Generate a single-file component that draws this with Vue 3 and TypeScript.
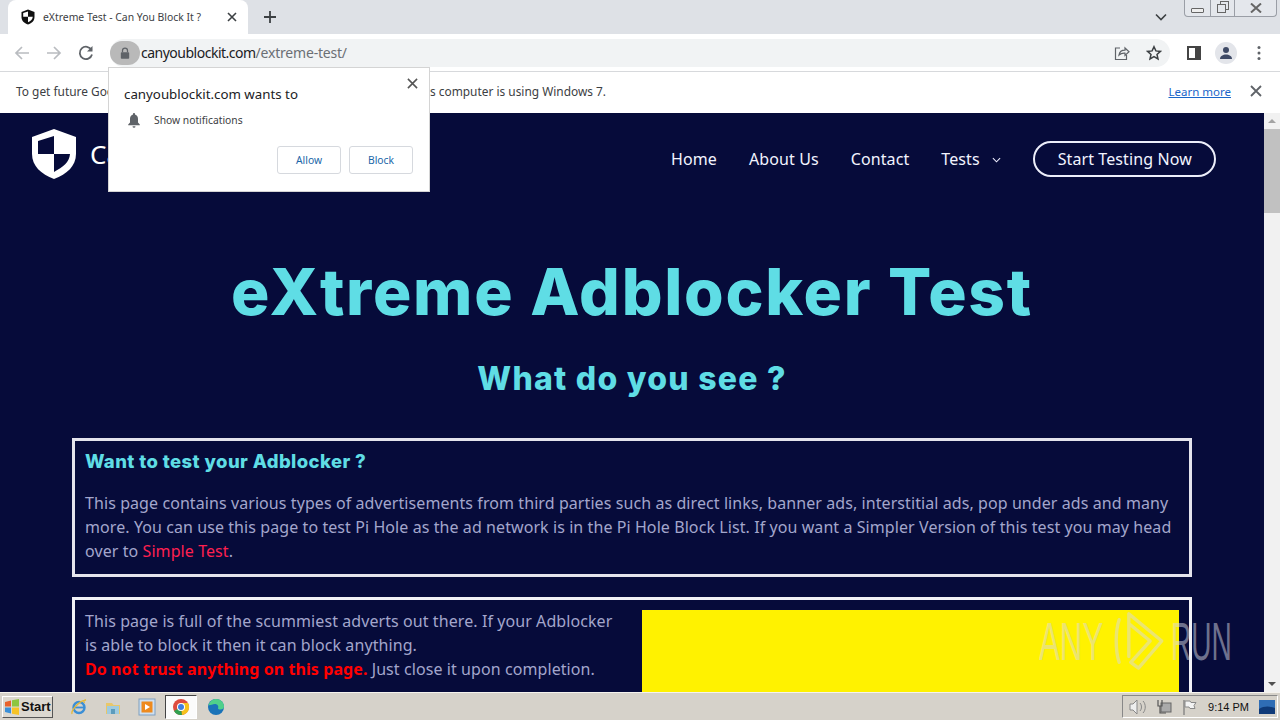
<template>
  <div class="screen">
    <div class="tabstrip">
      <div class="tab">
        <svg class="favicon" viewBox="0 0 16 16" width="16" height="16">
          <path d="M8 .5 14.500 3v5c0 3.600-2.600 6.300-6.500 7.500C4.100 14.300 1.500 11.600 1.500 8V3z" fill="#111" />
          <path d="M8 2.500v5.300H3.200V4zM8 7.800h4.800c-.2 2.600-2 4.400-4.800 5.500z" fill="#fff" />
        </svg>
        <span class="tab-title">eXtreme Test - Can You Block It ?</span>
        <svg class="tab-x" viewBox="0 0 10 10" width="10" height="10">
          <path d="M1 1l8 8M9 1l-8 8" stroke="#3c4043" stroke-width="1.600" />
        </svg>
      </div>
      <svg class="newtab" viewBox="0 0 14 14" width="14" height="14">
        <path d="M7 1v12M1 7h12" stroke="#3c4043" stroke-width="1.800" />
      </svg>
      <svg class="tabs-menu" viewBox="0 0 12 8" width="12" height="8">
        <path d="M1 1.500l5 5 5-5" fill="none" stroke="#3c4043" stroke-width="1.600" />
      </svg>
      <div class="winbtns">
        <span class="winbtn min"><i></i></span>
        <span class="winbtn max"><i></i><b></b></span>
        <span class="winbtn close">
          <svg viewBox="0 0 12 10" width="12" height="10">
            <path d="M1 .5l10 9M11 .5l-10 9" stroke="#666" stroke-width="2" />
          </svg>
        </span>
      </div>
    </div>

    <div class="toolbar">
      <svg class="nav-ic first" viewBox="0 0 16 16" width="16" height="16">
        <path d="M15 8H2M8 2 2 8l6 6" fill="none" stroke="#b9bcc0" stroke-width="1.700" />
      </svg>
      <svg class="nav-ic" viewBox="0 0 16 16" width="16" height="16">
        <path d="M1 8h13M8 2l6 6-6 6" fill="none" stroke="#b9bcc0" stroke-width="1.700" />
      </svg>
      <svg class="nav-ic" viewBox="0 0 16 16" width="16" height="16">
        <path d="M13.500 5A6.200 6.200 0 1 0 14 9.500" fill="none" stroke="#5f6368" stroke-width="1.800" />
        <path d="M14.500 1v5.500H9z" fill="#5f6368" />
      </svg>
      <div class="omnibox">
        <span class="lock-chip">
          <svg viewBox="0 0 12 14" width="10" height="12">
            <path d="M3 6V4a3 3 0 0 1 6 0v2" fill="none" stroke="#5f6368" stroke-width="1.500" />
            <rect x="1" y="6" width="10" height="8" rx="1" fill="#5f6368" />
          </svg>
        </span>
        <span class="url"><span class="host">canyoublockit.com</span>/extreme-test/</span>
        <svg class="share" viewBox="0 0 16 16" width="16" height="16">
          <path d="M6 3H1.500v11.500h11V10" fill="none" stroke="#5f6368" stroke-width="1.200" />
          <path d="M5 10c.5-3 3-4.800 6-4.800V3l4 3.800-4 3.700V8.200C8.500 8 6.500 8.600 5 10z" fill="none" stroke="#5f6368" stroke-width="1.200" />
        </svg>
        <svg class="star" viewBox="0 0 16 16" width="16" height="16">
          <path d="M8 1.700l1.900 4.200 4.500.5-3.400 3 1 4.500L8 11.600l-4 2.300 1-4.500-3.400-3 4.500-.5z" fill="none" stroke="#3c4043" stroke-width="1.500" />
        </svg>
      </div>
      <svg class="panel" viewBox="0 0 14 14" width="14" height="14">
        <rect x="1" y="1" width="12" height="12" fill="#fff" stroke="#444" stroke-width="2" />
        <rect x="8" y="1" width="5" height="12" fill="#444" />
      </svg>
      <span class="avatar">
        <svg viewBox="0 0 16 16" width="16" height="16">
          <circle cx="8" cy="5" r="3" fill="#3f4a66" />
          <path d="M2 14c0-3 3-4.500 6-4.500s6 1.500 6 4.500z" fill="#3f4a66" />
        </svg>
      </span>
      <svg class="kebab" viewBox="0 0 4 16" width="4" height="16">
        <circle cx="2" cy="2.500" r="1.500" fill="#5f6368" />
        <circle cx="2" cy="8" r="1.500" fill="#5f6368" />
        <circle cx="2" cy="13.500" r="1.500" fill="#5f6368" />
      </svg>
    </div>

    <div class="infobar">
      <span class="info-text">To get future Google Chrome updates, you'll need Windows 10 or later. This computer is using Windows 7.</span>
      <a class="learn">Learn more</a>
      <svg class="info-x" viewBox="0 0 12 12" width="12" height="12">
        <path d="M1 1l10 10M11 1 1 11" stroke="#5f6368" stroke-width="1.800" />
      </svg>
    </div>

    <div class="viewport">
      <main class="page">
        <header class="site-head">
          <div class="brand">
            <svg viewBox="0 0 44 50" width="44" height="50">
              <path d="M22 0 44 8v17c0 12-9 20-22 25C9 45 0 37 0 25V8z" fill="#fff" />
              <path d="M22 7v18H6V12zM22 25h16c-.5 8-7 13-16 18z" fill="#060b3a" />
            </svg>
            <span class="brand-name">Can You Block It</span>
          </div>
          <nav class="nav">
            <a v-for="link in links" :key="link">{{ link }}</a>
            <a class="tests">Tests
              <svg viewBox="0 0 10 6" width="9" height="6">
                <path d="M1 1l4 4 4-4" fill="none" stroke="#eef" stroke-width="1.200" />
              </svg>
            </a>
            <a class="cta">Start Testing Now</a>
          </nav>
        </header>

        <h1>eXtreme Adblocker Test</h1>
        <h2>What do you see ?</h2>

        <section class="box intro">
          <h3>Want to test your Adblocker ?</h3>
          <p>This page contains various types of advertisements from third parties such as direct links, banner ads, interstitial ads, pop under ads and many more. You can use this page to test Pi Hole as the ad network is in the Pi Hole Block List. If you want a Simpler Version of this test you may head over to <a class="simple">Simple Test</a>.</p>
        </section>

        <section class="box split">
          <p class="warn-copy">This page is full of the scummiest adverts out there. If your Adblocker is able to block it then it can block anything.<br /><strong>Do not trust anything on this page.</strong> Just close it upon completion.</p>
          <div class="ad"></div>
        </section>
      </main>
      <div class="scrollbar">
        <span class="arrow up"></span>
        <span class="thumb"></span>
        <span class="track"></span>
        <span class="arrow down"></span>
      </div>

      <div class="watermark">
        <span class="wm-any">ANY</span>
        <svg viewBox="0 0 56 64" width="55" height="62">
          <path d="M8 10C4 22 4 42 8 54M18 4l34 28-24 28-8-6 20-22-22-18M18 4v44" fill="none" stroke="currentColor" stroke-width="3.500" stroke-linejoin="round" stroke-linecap="round" />
        </svg>
        <span class="wm-run">RUN</span>
      </div>
    </div>

    <div class="prompt">
      <svg class="prompt-x" viewBox="0 0 12 12" width="11" height="11">
        <path d="M1 1l10 10M11 1 1 11" stroke="#555" stroke-width="1.700" />
      </svg>
      <div class="prompt-title">canyoublockit.com wants to</div>
      <div class="prompt-row">
        <svg viewBox="0 0 14 16" width="14" height="16">
          <path d="M7 1c-.7 0-1 .5-1 1v.6C3.800 3.200 3 5 3 7v3.500L1.200 12.500v.8h11.600v-.8L11 10.500V7c0-2-.8-3.800-3-4.400V2c0-.5-.3-1-1-1z" fill="#5f6368" />
          <path d="M5.500 14.200a1.500 1.500 0 0 0 3 0z" fill="#5f6368" />
        </svg>
        <span>Show notifications</span>
      </div>
      <div class="prompt-actions">
        <button>Allow</button>
        <button>Block</button>
      </div>
    </div>

    <footer class="taskbar">
      <div class="start">
        <svg viewBox="0 0 16 16" width="16" height="16">
          <path d="M1 3l6-1.500v6H1z" fill="#e8622c" />
          <path d="M8 1.300 15 0v7.500H8z" fill="#8dc63f" />
          <path d="M1 8.500h6v6L1 13z" fill="#3a8fd8" />
          <path d="M8 8.500h7V16l-7-1.300z" fill="#f7c325" />
        </svg>
        <span>Start</span>
      </div>
      <span class="task ie">
        <svg viewBox="0 0 18 18" width="18" height="18">
          <circle cx="9" cy="9.500" r="5.500" fill="none" stroke="#3b8fd6" stroke-width="2.400" />
          <path d="M4 9.500h10" stroke="#3b8fd6" stroke-width="1.800" />
          <path d="M2 16C1 13 8 3 16 2c-2 0-2.500 1-1.500 3" fill="none" stroke="#e5b93a" stroke-width="1.300" />
        </svg>
      </span>
      <span class="task">
        <svg viewBox="0 0 18 18" width="18" height="18">
          <path d="M2 5h6l1.500 2H16v9H2z" fill="#e8c76a" />
          <rect x="3" y="8" width="12" height="8" fill="#9fcbe0" />
          <rect x="7" y="11" width="4" height="5" fill="#5d9cbc" />
        </svg>
      </span>
      <span class="task">
        <svg viewBox="0 0 18 18" width="18" height="18">
          <rect x="1" y="1" width="16" height="16" fill="#cfe0f0" stroke="#7f9fc0" />
          <rect x="3.500" y="3.500" width="11" height="11" fill="#ee8a1d" />
          <path d="M7 6l5 3-5 3z" fill="#fff" />
        </svg>
      </span>
      <span class="task active">
        <svg viewBox="0 0 18 18" width="18" height="18">
          <circle cx="9" cy="9" r="8" fill="#dd4b3e" />
          <path d="M9 9 2 13a8 8 0 0 0 8 4z" fill="#2fa04f" />
          <path d="M9 5h7a8 8 0 0 1-6 12z" fill="#f6c21c" />
          <circle cx="9" cy="9" r="4" fill="#fff" />
          <circle cx="9" cy="9" r="3" fill="#3f7fe0" />
        </svg>
      </span>
      <span class="task edge">
        <svg viewBox="0 0 18 18" width="18" height="18">
          <circle cx="9" cy="9" r="8" fill="#1a73b8" />
          <path d="M1.500 7C3 2.500 7 1 9 1c4.500 0 8 3.500 8 7.500 0 2-1.500 3-3.500 3-1.500 0-2.500-.5-2.500-1.500 1-1.500-.5-4-3-4-3 0-5.500 2-6.500 1z" fill="#4fd08a" />
        </svg>
      </span>
      <div class="tray">
        <svg viewBox="0 0 18 16" width="18" height="16">
          <path d="M1 5h3l4-4v14l-4-4H1z" fill="#eee" stroke="#888" />
          <path d="M11 4c2 2 2 6 0 8M14 2c3 3 3 9 0 12" fill="none" stroke="#888" />
        </svg>
        <svg viewBox="0 0 16 16" width="16" height="16">
          <rect x="5" y="4" width="10" height="9" fill="#aaa" stroke="#666" />
          <path d="M2 1v6h4V1M4 7v7h6" fill="none" stroke="#555" stroke-width="1.200" />
        </svg>
        <svg viewBox="0 0 16 16" width="16" height="16">
          <path d="M3 1v15" stroke="#777" stroke-width="1.200" />
          <path d="M4 2h5l1 1.500h5l-2 3 1 3H9L8 8H4z" fill="#f3f3f3" stroke="#888" />
        </svg>
        <span class="clock">9:14 PM</span>
        <svg viewBox="0 0 16 14" width="16" height="14">
          <rect width="16" height="14" fill="#2f6db5" />
          <path d="M0 9c5-3 10-3 16-1v6H0z" fill="#0f3a78" />
        </svg>
      </div>
    </footer>
  </div>
</template>

<script setup lang="ts">
  const links: string[] = ["Home", "About Us", "Contact"];
</script>

<style>
  html,
  body {
    margin: 0;
    overflow: hidden;
  }
</style>

<style scoped>
  .screen {
    position: relative;
    width: 1280px;
    height: 720px;
    display: flex;
    flex-direction: column;
    overflow: hidden;
    font-family: "Open Sans", "Noto Sans", sans-serif;
    background: #fff;
  }

  /* browser chrome */
  .tabstrip {
    height: 34px;
    flex: none;
    display: flex;
    align-items: flex-end;
    background: #dee1e6;
    padding-left: 8px;
    box-sizing: border-box;
  }

  .tab {
    width: 240px;
    height: 34px;
    background: #fff;
    border-radius: 8px 8px 0 0;
    display: flex;
    align-items: center;
    box-sizing: border-box;
    padding: 0 8px 0 12px;
  }

  .favicon {
    flex: none;
    margin-right: 7px;
  }

  .tab-title {
    flex: 1;
    font-size: 10.400px;
    color: #3c4043;
    white-space: nowrap;
    font-family: "Noto Sans", sans-serif;
  }

  .tab-x {
    margin-right: 3px;
  }

  .newtab {
    margin: 0 0 10px 15px;
  }

  .tabs-menu {
    margin: 0 0 13px auto;
  }

  .winbtns {
    display: flex;
    align-self: flex-start;
    margin: 0 3px 0 17px;
    height: 16px;
    border: 1px solid #9a9ea6;
    border-top: none;
    border-radius: 0 0 4px 4px;
    background: #e4e7ec;
  }

  .winbtn {
    width: 24px;
    display: flex;
    align-items: center;
    justify-content: center;
    position: relative;
    border-left: 1px solid #9a9ea6;
    box-sizing: border-box;
  }

  .winbtn.min {
    border-left: none;
    width: 25px;
  }

  .winbtn.close {
    width: 42px;
  }

  .min i {
    width: 11px;
    height: 3px;
    margin-top: 4px;
    border: 1px solid #666;
    border-radius: 1px;
    background: #eee;
  }

  .max i,
  .max b {
    position: absolute;
    width: 7px;
    height: 7px;
    border: 1.500px solid #666;
    background: #e4e7ec;
  }

  .max i {
    left: 9px;
    top: 1px;
  }

  .max b {
    left: 6px;
    top: 4px;
  }

  .toolbar {
    height: 37px;
    flex: none;
    display: flex;
    align-items: center;
    background: #fff;
    border-bottom: 1px solid #d7d9dc;
  }

  .nav-ic {
    margin-left: 16px;
  }

  .nav-ic.first {
    margin-left: 14px;
  }

  .omnibox {
    width: 1060px;
    height: 28px;
    margin-left: 16px;
    border-radius: 14px;
    background: #f1f3f4;
    display: flex;
    align-items: center;
  }

  .lock-chip {
    width: 30px;
    height: 24px;
    border-radius: 12px;
    background: #b9b9b9;
    display: flex;
    align-items: center;
    justify-content: center;
    flex: none;
  }

  .url {
    flex: 1;
    font-size: 14px;
    letter-spacing: -0.2px;
    color: #6b6f74;
    margin-left: 1px;
    font-family: "Noto Sans", sans-serif;
  }

  .host {
    color: #202124;
    letter-spacing: -0.5px;
  }

  .share {
    margin-right: 16px;
  }

  .star {
    margin-right: 8px;
  }

  .panel {
    margin-left: 17px;
  }

  .avatar {
    width: 22px;
    height: 22px;
    border-radius: 50%;
    background: #e3e5ea;
    display: flex;
    align-items: center;
    justify-content: center;
    margin-left: 14px;
  }

  .kebab {
    margin-left: 20px;
  }

  .infobar {
    height: 41px;
    flex: none;
    display: flex;
    align-items: center;
    padding: 0 18px 3px 16px;
    box-sizing: border-box;
    background: #fff;
    font-size: 11.900px;
    color: #3c4043;
    font-family: "Noto Sans", sans-serif;
  }

  .info-text {
    flex: 1;
    white-space: nowrap;
  }

  .learn {
    color: #1a66c9;
    text-decoration: underline;
    font-size: 11.500px;
    margin-right: 19px;
  }

  /* page */
  .viewport {
    position: relative;
    flex: 1;
    min-height: 0;
    display: flex;
    overflow: hidden;
    background: #060b3a;
  }

  .page {
    flex: 1;
    min-width: 0;
    background: #060b3a;
  }

  .site-head {
    height: 92px;
    display: flex;
    align-items: center;
    justify-content: space-between;
    padding: 0 48px 0 32px;
    box-sizing: border-box;
  }

  .brand {
    display: flex;
    align-items: center;
    gap: 14px;
    margin-bottom: 10px;
    color: #fff;
    font-size: 26px;
    font-family: "Noto Sans", sans-serif;
  }

  .nav {
    display: flex;
    align-items: center;
    gap: 32px;
    font-size: 16px;
    letter-spacing: 0.1px;
    color: #f2f4ff;
    font-family: "Noto Sans", sans-serif;
  }

  .tests svg {
    margin: 0 0 2px 8.500px;
  }

  .cta {
    height: 36px;
    box-sizing: border-box;
    border: 2px solid #eceefa;
    border-radius: 18px;
    padding: 0 22.200px;
    display: flex;
    align-items: center;
  }

  h1,
  h2,
  h3 {
    margin: 0;
    font-family: Inter, "DejaVu Sans", sans-serif;
    font-weight: 800;
    color: #5fdde5;
  }

  h1 {
    text-align: center;
    font-size: 64px;
    line-height: 72px;
    margin-top: 51px;
    letter-spacing: 1.750px;
  }

  h2 {
    text-align: center;
    font-size: 32px;
    line-height: 40px;
    margin-top: 31px;
    letter-spacing: 1.250px;
  }

  .box {
    width: 1120px;
    margin-left: 72px;
    box-sizing: border-box;
    border: 3px solid #e4e4ec;
    color: #a3a6cc;
    font-size: 16px;
    line-height: 24px;
    letter-spacing: 0.08px;
    font-family: "Noto Sans", sans-serif;
  }

  .intro {
    margin-top: 39px;
    height: 139px;
    padding: 6px 10px;
  }

  .intro h3 {
    font-size: 18.500px;
    line-height: 28px;
    letter-spacing: 0.4px;
  }

  .intro p {
    margin: 16px 0 0;
  }

  .simple {
    color: #ff2050;
  }

  .split {
    margin-top: 20px;
    height: 200px;
    display: flex;
    padding: 10px;
    gap: 25px;
    border-color: #f2f2f6;
  }

  .warn-copy {
    width: 532px;
    margin: -1px 0 0;
    flex: none;
  }

  .warn-copy strong {
    color: #ff0000;
    font-weight: 700;
  }

  .ad {
    flex: 1;
    background: #fff200;
  }

  .scrollbar {
    width: 16px;
    flex: none;
    background: #f1f1f1;
    display: flex;
    flex-direction: column;
    align-items: center;
  }

  .arrow {
    width: 0;
    height: 0;
    border-left: 4px solid transparent;
    border-right: 4px solid transparent;
  }

  .arrow.up {
    border-bottom: 4px solid #a3a3a3;
    margin: 6px 0;
  }

  .arrow.down {
    border-top: 4px solid #505050;
    margin: 6px 0;
  }

  .thumb {
    width: 100%;
    height: 84px;
    background: #c1c1c1;
  }

  .track {
    flex: 1;
  }

  .watermark {
    position: absolute;
    left: 1039px;
    top: 497px;
    display: flex;
    align-items: center;
    color: rgba(215, 215, 225, 0.5);
    font-family: "Liberation Sans", sans-serif;
    font-size: 53px;
  }

  .wm-any,
  .wm-run {
    display: inline-block;
    transform-origin: left center;
  }

  .wm-any {
    width: 72px;
    transform: scaleX(0.59);
  }

  .wm-run {
    width: 62px;
    margin-left: 5px;
    transform: scaleX(0.53);
  }

  /* notification prompt */
  .prompt {
    position: absolute;
    left: 108px;
    top: 67px;
    width: 322px;
    height: 125px;
    box-sizing: border-box;
    background: #fff;
    border: 1px solid #d4d4d4;
    padding: 16px 16px 0 15px;
    font-family: "Noto Sans", sans-serif;
    color: #3c4043;
  }

  .prompt-x {
    position: absolute;
    right: 11px;
    top: 10px;
  }

  .prompt-title {
    font-size: 13.300px;
    line-height: 20px;
    color: #202124;
  }

  .prompt-row {
    margin-top: 8px;
    display: flex;
    align-items: center;
    gap: 13px;
    font-size: 10.300px;
    padding-left: 3px;
  }

  .prompt-actions {
    margin-top: 18px;
    display: flex;
    justify-content: flex-end;
    gap: 8px;
  }

  .prompt-actions button {
    width: 64px;
    height: 28px;
    padding: 0;
    background: #fff;
    border: 1px solid #d6d9de;
    border-radius: 3px;
    color: #1a66a8;
    font-size: 10.300px;
    font-family: "Noto Sans", sans-serif;
  }

  /* windows taskbar */
  .taskbar {
    height: 28px;
    flex: none;
    display: flex;
    align-items: center;
    background: #d6d2ca;
    border-top: 1px solid #f5f3ee;
    box-sizing: border-box;
  }

  .start {
    width: 51px;
    height: 22px;
    margin-left: 2px;
    display: flex;
    align-items: center;
    gap: 1px;
    padding-left: 1px;
    box-sizing: border-box;
    background: #dcd8d0;
    border: 1px solid;
    border-color: #fff #555 #555 #fff;
    font-family: "Liberation Sans", sans-serif;
    font-weight: 700;
    font-size: 13px;
    color: #111;
  }

  .task {
    width: 18px;
    height: 18px;
    margin-left: 16px;
    display: flex;
    align-items: center;
    justify-content: center;
  }

  .task.ie {
    margin-left: 17px;
  }

  .task.active {
    width: 30px;
    height: 22px;
    margin-left: 9px;
    background: #fbfbfb;
    border: 1px solid;
    border-color: #444 #fff #fff #444;
  }

  .task.edge {
    margin-left: 10px;
  }

  .tray {
    margin-left: auto;
    margin-right: 2px;
    width: 156px;
    height: 23px;
    box-sizing: border-box;
    border: 1px solid;
    border-color: #888 #fff #fff #888;
    display: flex;
    align-items: center;
    gap: 9px;
    padding: 0 2px 0 6px;
  }

  .clock {
    flex: 1;
    text-align: right;
    margin-right: 1px;
    font-family: "Liberation Sans", sans-serif;
    font-size: 11px;
    color: #111;
    white-space: nowrap;
  }
</style>
